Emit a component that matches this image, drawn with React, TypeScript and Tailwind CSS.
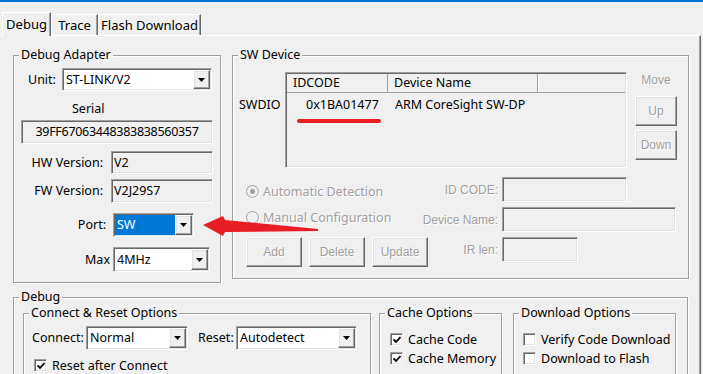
import React from "react";

const sunken =
  "border border-t-[#a0a0a0] border-l-[#a0a0a0] border-b-white border-r-white shadow-[inset_1px_1px_0_#696969,inset_-1px_-1px_0_#e3e3e3]";
const raised =
  "border border-t-white border-l-white border-b-[#696969] border-r-[#696969] shadow-[inset_-1px_-1px_0_#a0a0a0,inset_1px_1px_0_#e3e3e3]";
const groupCls =
  "border border-[#a0a0a0] shadow-[1px_1px_0_#fff,inset_1px_1px_0_#fff] shrink-0 min-w-0 p-0 m-0";
const legendCls = "ml-[5px] px-[2px] leading-[16px] bg-[#f0f0f0]";
const dis =
  "font-['Liberation_Sans',sans-serif] text-[12px] text-[#a0a0a0] [text-shadow:1px_1px_0_#fff]";

function Tri() {
  return (
    <svg width="7" height="4" viewBox="0 0 7 4">
      <polygon points="0,0 7,0 3.5,4" fill="#000" />
    </svg>
  );
}

function Combo({
  className,
  value,
  selected,
}: {
  className: string;
  value: string;
  selected?: boolean;
}) {
  return (
    <div className={`${sunken} bg-white flex items-stretch p-[1px] shrink-0 ${className}`}>
      <div
        className={`flex-1 flex items-center pl-[2px] min-w-0 whitespace-nowrap ${
          selected ? "bg-[#0078d7] text-white" : ""
        }`}
      >
        {value}
      </div>
      <div className={`${raised} w-[17px] bg-[#f0f0f0] flex items-center justify-center`}>
        <Tri />
      </div>
    </div>
  );
}

function Check({ checked, label }: { checked?: boolean; label: string }) {
  return (
    <div className="flex items-center leading-[17px] whitespace-nowrap">
      <div className={`${sunken} bg-white w-[13px] h-[13px] flex items-center justify-center shrink-0`}>
        {checked && (
          <svg width="8" height="8" viewBox="0 0 8 8">
            <path d="M0.5 3.5 L3 6 L7.5 1" stroke="#000" strokeWidth="1.8" fill="none" />
          </svg>
        )}
      </div>
      <span className="ml-[5px]">{label}</span>
    </div>
  );
}

function DisBtn({ label, className }: { label: string; className: string }) {
  return (
    <div className={`${raised} bg-[#f0f0f0] flex items-center justify-center shrink-0 ${dis} ${className}`}>
      {label}
    </div>
  );
}

function Radio({ on, label }: { on?: boolean; label: string }) {
  return (
    <div className="flex items-center">
      <div className="w-[13px] h-[13px] rounded-full border border-[#a0a0a0] bg-[#f0f0f0] shadow-[1px_1px_0_#fff] flex items-center justify-center shrink-0">
        {on && <div className="w-[5px] h-[5px] rounded-full bg-[#a0a0a0]" />}
      </div>
      <span className="ml-[4px] whitespace-nowrap text-[#a0a0a0] [text-shadow:1px_1px_0_#fff]">{label}</span>
    </div>
  );
}

export default function App() {
  return (
    <div className="w-[703px] h-[374px] bg-[#f0f0f0] overflow-hidden relative text-[12.5px] leading-[16px] text-black font-['Noto_Sans',sans-serif]">
      <div className="h-[2px] bg-[#0078d7]" />
      {/* tabs */}
      <div className="flex items-end h-[33px] pl-[2px] relative z-10">
        <div className="w-[49px] h-[24px] -mb-[1px] bg-[#f0f0f0] border-l border-t border-r border-l-white border-t-white border-r-[#696969] shadow-[inset_-1px_0_0_#a0a0a0] flex justify-center pt-[3px] text-[13px]">
          Debug
        </div>
        <div className="w-[47px] h-[21px] bg-[#f0f0f0] border-l border-t border-r border-l-white border-t-white border-r-[#696969] shadow-[inset_-1px_0_0_#a0a0a0] flex justify-center pt-[2px] text-[13px]">
          Trace
        </div>
        <div className="w-[103px] h-[21px] bg-[#f0f0f0] border-l border-t border-r border-l-white border-t-white border-r-[#696969] shadow-[inset_-1px_0_0_#a0a0a0] flex justify-center pt-[2px] text-[13px]">
          Flash Download
        </div>
      </div>
      {/* panel */}
      <div className="w-[701px] h-[339px] border-t border-r border-t-white border-r-[#696969] shadow-[inset_-1px_0_0_#a0a0a0] pt-[11px] pl-[13px]">
        <div className="flex items-start">
          {/* Debug Adapter */}
          <fieldset className={`${groupCls} w-[208px] h-[236px]`}>
            <legend className={legendCls}>Debug Adapter</legend>
            <div className="flex flex-col items-start">
              <div className="flex items-center mt-[5px]">
                <span className="ml-[14px] w-[34px]">Unit:</span>
                <Combo className="w-[150px] h-[23px]" value="ST-LINK/V2" />
              </div>
              <div className="mt-[9px] ml-[58px] leading-[17px]">Serial</div>
              <div className={`${sunken} mt-[3px] ml-[7px] w-[192px] h-[24px] flex items-center justify-center tracking-[-0.3px]`}>
                39FF67063448383838560357
              </div>
              <div className="flex items-center mt-[7px]">
                <span className="w-[89px] text-right">HW Version:</span>
                <div className={`${sunken} ml-[8px] w-[102px] h-[23px] flex items-center pl-[2px]`}>V2</div>
              </div>
              <div className="flex items-center mt-[5px]">
                <span className="w-[89px] text-right">FW Version:</span>
                <div className={`${sunken} ml-[8px] w-[102px] h-[24px] flex items-center pl-[2px]`}>V2J29S7</div>
              </div>
              <div className="flex items-center mt-[10px]">
                <span className="w-[92px] text-right">Port:</span>
                <div className="ml-[7px]">
                  <Combo className="w-[81px] h-[24px]" value="SW" selected />
                </div>
              </div>
              <div className="flex items-center mt-[10px]">
                <span className="w-[96px] text-right">Max</span>
                <div className="ml-[3px]">
                  <Combo className="w-[97px] h-[25px]" value="4MHz" />
                </div>
              </div>
            </div>
          </fieldset>

          {/* SW Device */}
          <fieldset className={`${groupCls} ml-[11px] w-[457px] h-[232px]`}>
            <legend className={legendCls}>SW Device</legend>
            <div className="flex flex-col">
              <div className="flex items-start mt-[9px]">
                <span className="ml-[6px] w-[46px] mt-[25px]">SWDIO</span>
                <div className={`${sunken} w-[342px] h-[96px] bg-[#f0f0f0] p-[1px] flex flex-col`}>
                  <div className="flex h-[19px] border-b border-b-[#a0a0a0] shrink-0">
                    <div className="w-[101px] border-r border-r-[#a0a0a0] pl-[6px] flex items-center">IDCODE</div>
                    <div className="w-[150px] border-r border-r-[#a0a0a0] shadow-[1px_0_0_#fff] pl-[6px] flex items-center">
                      Device Name
                    </div>
                    <div className="flex-1" />
                  </div>
                  <div className="flex mt-[4px]">
                    <div className="w-[101px] pl-[19px]">0x1BA01477</div>
                    <div className="pl-[7px] whitespace-nowrap">ARM CoreSight SW-DP</div>
                  </div>
                </div>
                <div className="ml-[8px] w-[42px] flex flex-col items-center">
                  <span className={dis}>Move</span>
                  <DisBtn label="Up" className="mt-[8px] w-[42px] h-[30px]" />
                  <DisBtn label="Down" className="mt-[4px] w-[42px] h-[30px]" />
                </div>
              </div>

              <div className="flex items-center mt-[9px] h-[25px]">
                <div className="w-[181px] pl-[13px] pt-[4px]">
                  <Radio on label="Automatic Detection" />
                </div>
                <div className={`w-[84px] flex justify-end whitespace-nowrap ${dis}`}>ID CODE:</div>
                <div className={`${sunken} ml-[4px] w-[125px] h-[25px] bg-[#f0f0f0]`} />
              </div>
              <div className="flex items-center mt-[5px] h-[25px]">
                <div className="w-[181px] pl-[13px] -mt-[4px]">
                  <Radio label="Manual Configuration" />
                </div>
                <div className={`w-[84px] flex justify-end whitespace-nowrap ${dis}`}>Device Name:</div>
                <div className={`${sunken} ml-[4px] w-[174px] h-[25px] bg-[#f0f0f0]`} />
              </div>
              <div className="flex items-start mt-[5px]">
                <div className="w-[195px] pl-[13px] flex gap-[7px]">
                  <DisBtn label="Add" className="w-[56px] h-[30px]" />
                  <DisBtn label="Delete" className="w-[56px] h-[30px]" />
                  <DisBtn label="Update" className="w-[56px] h-[30px]" />
                </div>
                <div className={`w-[70px] h-[25px] flex items-center justify-end whitespace-nowrap ${dis}`}>IR len:</div>
                <div className={`${sunken} ml-[4px] w-[76px] h-[25px] bg-[#f0f0f0]`} />
              </div>
            </div>
          </fieldset>
        </div>

        {/* Debug */}
        <fieldset className={`${groupCls} mt-[6px] w-[675px] h-[110px]`}>
          <legend className={legendCls}>Debug</legend>
          <div className="flex items-start">
            <fieldset className={`${groupCls} ml-[9px] w-[348px] h-[90px]`}>
              <legend className={legendCls}>Connect &amp; Reset Options</legend>
              <div className="flex items-center mt-[5px]">
                <span className="ml-[8px] w-[54px]">Connect:</span>
                <Combo className="w-[102px] h-[24px]" value="Normal" />
                <span className="ml-[10px] w-[38px]">Reset:</span>
                <Combo className="w-[121px] h-[24px]" value="Autodetect" />
              </div>
              <div className="mt-[7px] ml-[10px]">
                <Check checked label="Reset after Connect" />
              </div>
            </fieldset>
            <fieldset className={`${groupCls} ml-[8px] w-[123px] h-[90px]`}>
              <legend className={legendCls}>Cache Options</legend>
              <div className="mt-[10px] ml-[10px]">
                <Check checked label="Cache Code" />
              </div>
              <div className="mt-[2px] ml-[10px]">
                <Check checked label="Cache Memory" />
              </div>
            </fieldset>
            <fieldset className={`${groupCls} ml-[11px] w-[163px] h-[90px]`}>
              <legend className={legendCls}>Download Options</legend>
              <div className="mt-[10px] ml-[9px]">
                <Check label="Verify Code Download" />
              </div>
              <div className="mt-[2px] ml-[9px]">
                <Check label="Download to Flash" />
              </div>
            </fieldset>
          </div>
        </fieldset>
      </div>

      {/* annotations */}
      <div className="absolute left-[297px] top-[119px] w-[84px] h-[4px] rounded-full bg-[#e81d25]" />
      <svg className="absolute left-[200px] top-[212px]" width="122" height="28" viewBox="0 0 122 28">
        <polygon points="3,13 23,4 25,8 118,17 118,19 25,20 23,24" fill="#e81d25" />
      </svg>
    </div>
  );
}
